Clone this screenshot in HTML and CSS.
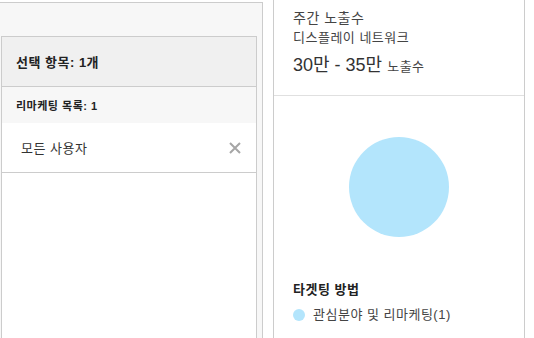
FILE: index.html
```html
<!DOCTYPE html>
<html lang="ko">
<head>
    <meta charset="UTF-8">
    <meta name="viewport" content="width=device-width, initial-scale=1.0">
    <title>타겟팅 선택</title>
    <link rel="stylesheet" href="styles.css">
</head>
<body>
    <div class="page">
        <div class="selection">
            <div class="picked">
                <div class="picked-head">선택 항목: 1개</div>
                <div class="list-head">리마케팅 목록: 1</div>
                <div class="picked-item">
                    <span>모든 사용자</span>
                    <button class="remove" title="삭제">
                        <svg width="12" height="12" viewBox="0 0 12 12">
                            <path d="M1 1 L11 11 M11 1 L1 11" stroke="#a6a6a6" stroke-width="2"/>
                        </svg>
                    </button>
                </div>
            </div>
        </div>
        <div class="estimate">
            <div class="reach">
                <div class="reach-title">주간 노출수</div>
                <div class="reach-network">디스플레이 네트워크</div>
                <div class="reach-value">30만 - 35만 <span class="reach-unit">노출수</span></div>
            </div>
            <div class="chart">
                <div class="pie"></div>
            </div>
            <div class="legend">
                <div class="legend-title">타겟팅 방법</div>
                <div class="legend-row"><span class="dot"></span>관심분야 및 리마케팅(1)</div>
            </div>
        </div>
    </div>
</body>
</html>
```

FILE: styles.css
```css
body {
    margin: 0;
    background-color: #fff;
    font-family: "Liberation Sans", "Noto Sans CJK KR", sans-serif;
    color: #333;
    letter-spacing: 0.5px;
}
.page {
    display: flex;
    height: 338px;
    overflow: hidden;
}
.selection {
    width: 263px;
    box-sizing: border-box;
    margin-top: 2px;
    padding: 33px 5px 0 1px;
    background-color: #f7f7f7;
    border-top: 1px solid #ccc;
    border-right: 1px solid #ccc;
}
.picked {
    height: 100%;
    display: flex;
    flex-direction: column;
    background-color: #fff;
    border: 1px solid #ccc;
    border-bottom: none;
}
.picked-head {
    height: 49px;
    display: flex;
    align-items: center;
    padding-left: 14px;
    background-color: #f0f0f0;
    border-bottom: 1px solid #ccc;
    font-size: 13px;
    font-weight: bold;
    color: #222;
}
.list-head {
    height: 36px;
    display: flex;
    align-items: center;
    padding-left: 14px;
    background-color: #f7f7f7;
    font-size: 11px;
    font-weight: bold;
    color: #222;
}
.picked-item {
    height: 49px;
    display: flex;
    align-items: center;
    justify-content: space-between;
    padding: 0 15px 0 19px;
    border-bottom: 1px solid #ccc;
    font-size: 13px;
    color: #333;
}
.remove {
    display: flex;
    padding: 0;
    border: none;
    background: none;
    cursor: pointer;
}
.estimate {
    width: 252px;
    box-sizing: border-box;
    margin-left: 10px;
    border-left: 1px solid #ccc;
    border-right: 1px solid #ccc;
    display: flex;
    flex-direction: column;
}
.reach {
    height: 96px;
    box-sizing: border-box;
    padding: 8px 0 0 19px;
    border-bottom: 1px solid #e0e0e0;
}
.reach-title {
    font-size: 14px;
    line-height: 20px;
    color: #444;
}
.reach-network {
    font-size: 13px;
    line-height: 19px;
    color: #444;
}
.reach-value {
    margin-top: 3px;
    font-size: 18px;
    line-height: 30px;
    color: #333;
    letter-spacing: 0;
}
.reach-unit {
    font-size: 13px;
    color: #444;
    letter-spacing: 0.5px;
}
.chart {
    display: flex;
    justify-content: center;
    padding-top: 41px;
}
.pie {
    width: 100px;
    height: 100px;
    border-radius: 50%;
    background-color: #b3e5fc;
}
.legend {
    padding: 44px 0 0 19px;
}
.legend-title {
    font-size: 13px;
    line-height: 18px;
    font-weight: bold;
    color: #222;
}
.legend-row {
    display: flex;
    align-items: center;
    margin-top: 7px;
    font-size: 13px;
    line-height: 18px;
    color: #444;
}
.dot {
    width: 12px;
    height: 12px;
    border-radius: 50%;
    margin-right: 8px;
    background-color: #b3e5fc;
}
```
